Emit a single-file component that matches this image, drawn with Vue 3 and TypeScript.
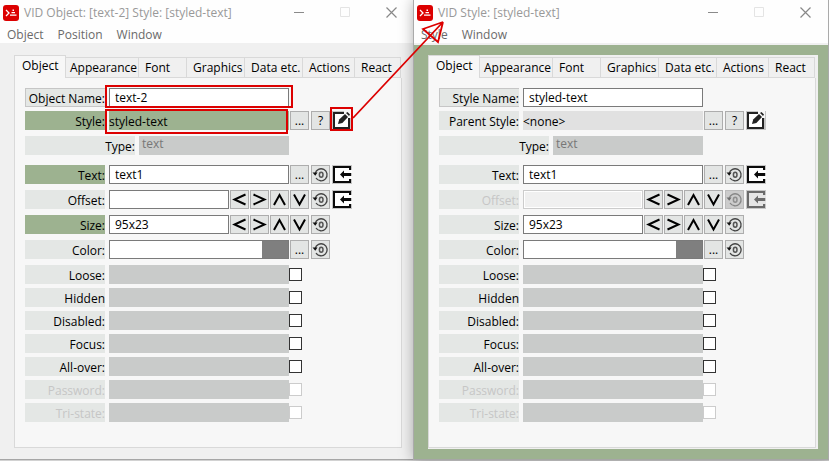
<script setup lang="ts">
interface Row {
  id: string
  label: string
  kind: 'name' | 'style' | 'type' | 'text' | 'pair' | 'color'
  value: string
  own?: boolean
  disabled?: boolean
  imports?: boolean
}

interface Flag {
  id: string
  label: string
  disabled?: boolean
}

interface Inspector {
  id: string
  title: string
  menus: string[]
  tinted: boolean
  rows: Row[]
}

const tabs: string[] = ['Object', 'Appearance', 'Font', 'Graphics', 'Data etc.', 'Actions', 'React']

const flags: Flag[] = [
  { id: 'loose', label: 'Loose:' },
  { id: 'hidden', label: 'Hidden' },
  { id: 'disabled', label: 'Disabled:' },
  { id: 'focus', label: 'Focus:' },
  { id: 'all-over', label: 'All-over:' },
  { id: 'password', label: 'Password:', disabled: true },
  { id: 'tri-state', label: 'Tri-state:', disabled: true },
]

const arrows = [
  { name: 'Left', path: 'M15.500 4.500 4.500 9.500 15.500 14.500' },
  { name: 'Right', path: 'M3.500 4.500 14.500 9.500 3.500 14.500' },
  { name: 'Up', path: 'M4 15 9.500 5 15 15' },
  { name: 'Down', path: 'M4 4.500 9.500 14.500 15 4.500' },
]

const inspectors: Inspector[] = [
  {
    id: 'object',
    title: 'VID Object: [text-2] Style: [styled-text]',
    menus: ['Object', 'Position', 'Window'],
    tinted: false,
    rows: [
      { id: 'name', label: 'Object Name:', kind: 'name', value: 'text-2' },
      { id: 'style', label: 'Style:', kind: 'style', value: 'styled-text', own: true },
      { id: 'type', label: 'Type:', kind: 'type', value: 'text' },
      { id: 'text', label: 'Text:', kind: 'text', value: 'text1', own: true, imports: true },
      { id: 'offset', label: 'Offset:', kind: 'pair', value: '', imports: true },
      { id: 'size', label: 'Size:', kind: 'pair', value: '95x23', own: true },
      { id: 'color', label: 'Color:', kind: 'color', value: '' },
    ],
  },
  {
    id: 'style',
    title: 'VID Style: [styled-text]',
    menus: ['Style', 'Window'],
    tinted: true,
    rows: [
      { id: 'name', label: 'Style Name:', kind: 'name', value: 'styled-text' },
      { id: 'style', label: 'Parent Style:', kind: 'style', value: '<none>' },
      { id: 'type', label: 'Type:', kind: 'type', value: 'text' },
      { id: 'text', label: 'Text:', kind: 'text', value: 'text1', imports: true },
      { id: 'offset', label: 'Offset:', kind: 'pair', value: '', disabled: true, imports: true },
      { id: 'size', label: 'Size:', kind: 'pair', value: '95x23' },
      { id: 'color', label: 'Color:', kind: 'color', value: '' },
    ],
  },
]
</script>

<template>
  <main class="desktop">
    <section v-for="win in inspectors" :key="win.id" class="window" :class="{ tinted: win.tinted }">
      <header class="titlebar">
        <svg class="logo" viewBox="0 0 16 16" aria-hidden="true">
          <rect width="16" height="16" rx="3" fill="#dc0000" />
          <path d="M3 5l3 3-3 3" fill="none" stroke="#fff" stroke-width="1.300" />
          <path d="M9.500 4.500h1.500v1.500H9.500zM8.500 7h3.500v1.200H8.500zM7 9.500h6.500v1.300H7z" fill="#fff" />
        </svg>
        <h1 class="title">{{ win.title }}</h1>
        <div class="controls">
          <button type="button" aria-label="Minimize">
            <svg viewBox="0 0 11 11"><path d="M0 5.500h10" stroke="#8a8a8a" /></svg>
          </button>
          <button type="button" aria-label="Maximize">
            <svg viewBox="0 0 11 11"><path d="M.5.5h9v9h-9z" fill="none" stroke="#e4e4e4" /></svg>
          </button>
          <button type="button" aria-label="Close">
            <svg viewBox="0 0 11 11"><path d="M.5.5l10 10M10.500.5l-10 10" stroke="#888" stroke-width="1.200" /></svg>
          </button>
        </div>
      </header>
      <nav class="menubar">
        <button v-for="menu in win.menus" :key="menu" type="button">{{ menu }}</button>
      </nav>

      <div class="client">
        <div class="tabpanel">
          <div class="tabs" role="tablist">
            <button
              v-for="(tab, i) in tabs"
              :key="tab"
              type="button"
              role="tab"
              class="tab"
              :class="['tab-' + i, { selected: i === 0 }]"
              :aria-selected="i === 0"
            >{{ tab }}</button>
          </div>

          <form class="page" @submit.prevent>
            <div
              v-for="row in win.rows"
              :key="row.id"
              class="row"
              :class="['row-' + row.kind, { own: row.own, off: row.disabled }]"
            >
              <label class="label" :for="win.id + '-' + row.id">{{ row.label }}</label>

              <output v-if="row.kind === 'style' || row.kind === 'type'" :id="win.id + '-' + row.id" class="value">{{ row.value }}</output>
              <div v-else-if="row.kind === 'color'" class="colorbox">
                <input :id="win.id + '-' + row.id" type="text" :value="row.value" />
                <span class="swatch"></span>
              </div>
              <input v-else :id="win.id + '-' + row.id" class="field" type="text" :value="row.value" :disabled="row.disabled" />

              <div class="tools">
                <template v-if="row.kind === 'pair'">
                  <button v-for="arrow in arrows" :key="arrow.name" type="button" class="tool" :aria-label="arrow.name">
                    <svg viewBox="0 0 19 19"><path :d="arrow.path" fill="none" stroke="#000" stroke-width="2" /></svg>
                  </button>
                </template>
                <button v-if="row.kind === 'style' || row.kind === 'text' || row.kind === 'color'" type="button" class="tool">...</button>
                <button v-if="row.kind === 'style'" type="button" class="tool second">?</button>
                <button v-if="row.kind === 'style'" type="button" class="tool picture" aria-label="Edit style">
                  <svg viewBox="0 0 20 19">
                    <rect width="20" height="19" fill="#c4c4c4" />
                    <rect x="1" y="1" width="17" height="17" fill="#222" />
                    <rect x="3" y="3" width="13" height="13" fill="#fff" />
                    <path d="M12 0h7v7h-3V3h-4z" fill="#f7f7f7" />
                    <path d="M6 13l1.200-4.500L13 3l3 3-5.600 6z" fill="#222" />
                    <path d="M14 2l1.500-1L18 3.500 17 5z" fill="#222" />
                  </svg>
                </button>
                <button
                  v-if="row.kind === 'text' || row.kind === 'pair' || row.kind === 'color'"
                  type="button"
                  class="tool second"
                  :disabled="row.disabled"
                  aria-label="Reset"
                >
                  <svg viewBox="0 0 19 19">
                    <path d="M4.200 8.500a6 6 0 1 1 .8 4.500" fill="none" stroke="#444" stroke-width="1.300" />
                    <path d="M1.500 7.500h5L4.300 10.800z" fill="#111" />
                    <ellipse cx="10.200" cy="9.700" rx="1.800" ry="2.500" fill="none" stroke="#555" stroke-width="1.500" />
                  </svg>
                </button>
                <button v-if="row.imports" type="button" class="tool picture" :disabled="row.disabled" aria-label="Import value">
                  <svg viewBox="0 0 20 19">
                    <rect width="20" height="19" fill="#c4c4c4" />
                    <rect x="1" y="1" width="18" height="17" fill="#0a0a0a" />
                    <rect x="3" y="3" width="14" height="13" fill="#fff" />
                    <path d="M16 5h4v3h-4zM16 11h4v3h-4z" fill="#fff" />
                    <path d="M8 9.500l4-4V8h7v3h-7v2.500z" fill="#0a0a0a" />
                  </svg>
                </button>
              </div>
            </div>

            <div v-for="flag in flags" :key="flag.id" class="row row-flag" :class="{ off: flag.disabled }">
              <label class="label" :for="win.id + '-' + flag.id">{{ flag.label }}</label>
              <span class="bar"></span>
              <input :id="win.id + '-' + flag.id" type="checkbox" :disabled="flag.disabled" />
            </div>
          </form>
        </div>
      </div>
    </section>

    <svg class="marks" viewBox="0 0 460 140" aria-hidden="true">
      <g fill="none" stroke="#dc0000" stroke-width="2">
        <rect x="106" y="86" width="186" height="21" />
        <rect x="106" y="110" width="181" height="23" />
        <rect x="331" y="108" width="21" height="22" />
        <path d="M353 118L443 22L423 29L438 42L443 22" stroke-width="1.800" />
      </g>
    </svg>
  </main>
</template>

<style>
body {
  margin: 0;
  background: #d2d2d2;
}
</style>

<style scoped>
* {
  box-sizing: border-box;
}

.desktop {
  position: relative;
  display: flex;
  overflow: hidden;
  padding-bottom: 1px;
  font-family: "Open Sans", "Noto Sans", sans-serif;
  font-size: 12px;
  line-height: 16px;
  color: #000;
}

button,
input {
  margin: 0;
  padding: 0;
  font: inherit;
  color: inherit;
  border: 0;
  border-radius: 0;
  background: none;
}

svg {
  display: block;
}

.window {
  flex: 1 1 0;
  min-width: 400px;
  background: #fefefe;
  border-bottom: 1px solid #a6a6a6;
}

.window.tinted {
  border-right: 1px solid #aaa;
  box-shadow: -1px 0 0 #aaa, 0 0 14px rgba(0, 0, 0, 0.35);
}

.titlebar {
  display: flex;
  align-items: center;
  height: 25px;
  padding-left: 3px;
}

.logo {
  width: 16px;
  height: 16px;
}

.title {
  flex: 1;
  margin: 0;
  padding-left: 5px;
  font-size: 12px;
  font-weight: 400;
  line-height: 16px;
  white-space: nowrap;
  color: #999;
}

.controls {
  display: flex;
}

.controls button {
  width: 46px;
  padding-left: 18px;
}

.controls svg {
  width: 11px;
  height: 11px;
}

.menubar {
  display: flex;
  gap: 14px;
  height: 18px;
  padding-left: 7px;
  color: #6a6a6a;
}

.menubar button {
  height: 18px;
  padding-top: 2px;
}

.client {
  padding: 12px 12px 11px 14px;
  background: #f0f0f0;
}

.tinted .client {
  padding: 10px 10px 10px 14px;
  background: #9db290;
  border-top: 2px solid #f0f0f0;
}

.tinted .tabpanel {
  padding: 0 2px 1px 0;
  background: #f0f0f0;
}

.tabs {
  display: flex;
  align-items: flex-end;
  height: 23px;
}

.tab {
  height: 21px;
  padding-left: 4px;
  text-align: left;
  white-space: nowrap;
  background: #f0f0f0;
  border: 1px solid #d9d9d9;
  border-width: 1px 1px 1px 0;
}

.tab.selected {
  height: 23px;
  padding: 0 0 2px 7px;
  background: #f7f7f7;
  border-width: 1px 1px 0 1px;
}

.tab-0 {
  width: 52px;
}

.tab-1 {
  width: 73px;
}

.tab-2 {
  width: 48px;
  padding-left: 6px;
}

.tab-3,
.tab-4 {
  width: 58px;
  padding-left: 6px;
}

.tab-5 {
  width: 52px;
  padding-left: 6px;
}

.tab-6 {
  width: 46px;
  padding-left: 6px;
}

.page {
  padding: 10px 10px 21px;
  background: #f7f7f7;
  border: 1px solid #d9d9d9;
  border-top: 0;
}

.row {
  display: flex;
  height: 19px;
  margin-bottom: 6px;
}

.row-name,
.row-flag {
  margin-bottom: 4px;
}

.row-type {
  margin-bottom: 10px;
}

.label {
  flex: none;
  width: 80px;
  margin-right: 4px;
  padding-top: 3px;
  text-align: right;
  white-space: nowrap;
  background: #e4e7e5;
}

.row-type .label {
  width: 110px;
}

.row-name .label {
  padding-top: 2px;
  border: 1px solid #c6c6c6;
  border-right: 0;
}

.own .label,
.own .value {
  background: #9db290;
}

.off .label {
  color: #c6c6c6;
}

.field,
.colorbox {
  flex: none;
  width: 180px;
  height: 19px;
  background: #fff;
  border: 1px solid #7a7a7a;
}

.field {
  padding-left: 5px;
}

.row-pair .field {
  width: 120px;
}

.field:disabled {
  background: #f0f0f0;
  border-color: #ccc;
  box-shadow: inset 0 0 0 1px #fff;
}

.colorbox {
  display: flex;
}

.colorbox input {
  flex: 1;
  min-width: 0;
}

.swatch {
  width: 26px;
  background: #7f7f7f;
}

.value {
  flex: none;
  width: 180px;
  padding-top: 3px;
  background: #e1e1e1;
}

.row-type .value {
  width: 150px;
  padding: 0 0 0 3px;
  color: #777;
  background: #c9cbca;
}

.tools {
  display: flex;
  gap: 1px;
  margin-left: 1px;
}

.tool {
  width: 19px;
  height: 19px;
  line-height: 17px;
  text-align: center;
  background: #e3e5e4;
  border: 1px solid #adadad;
}

.tool svg {
  width: 19px;
  height: 19px;
  margin: -1px;
}

.second {
  margin-left: 1px;
}

.picture {
  width: 20px;
  margin-left: 1px;
  border: 0;
}

.picture svg {
  width: 20px;
  height: 19px;
  margin: 0;
}

.tool:disabled {
  background: #ccc;
  border-color: #bbb;
}

.tool:disabled svg {
  opacity: 0.5;
}

.bar {
  flex: none;
  width: 180px;
  background: #c9cbca;
}

.row-flag input {
  appearance: none;
  width: 13px;
  height: 13px;
  margin-top: 3px;
  background: #fff;
  border: 1px solid #333;
}

.row-flag input:disabled {
  border-color: #ccc;
}

.marks {
  position: absolute;
  top: 0;
  left: 0;
  width: 460px;
  height: 140px;
  pointer-events: none;
}
</style>
